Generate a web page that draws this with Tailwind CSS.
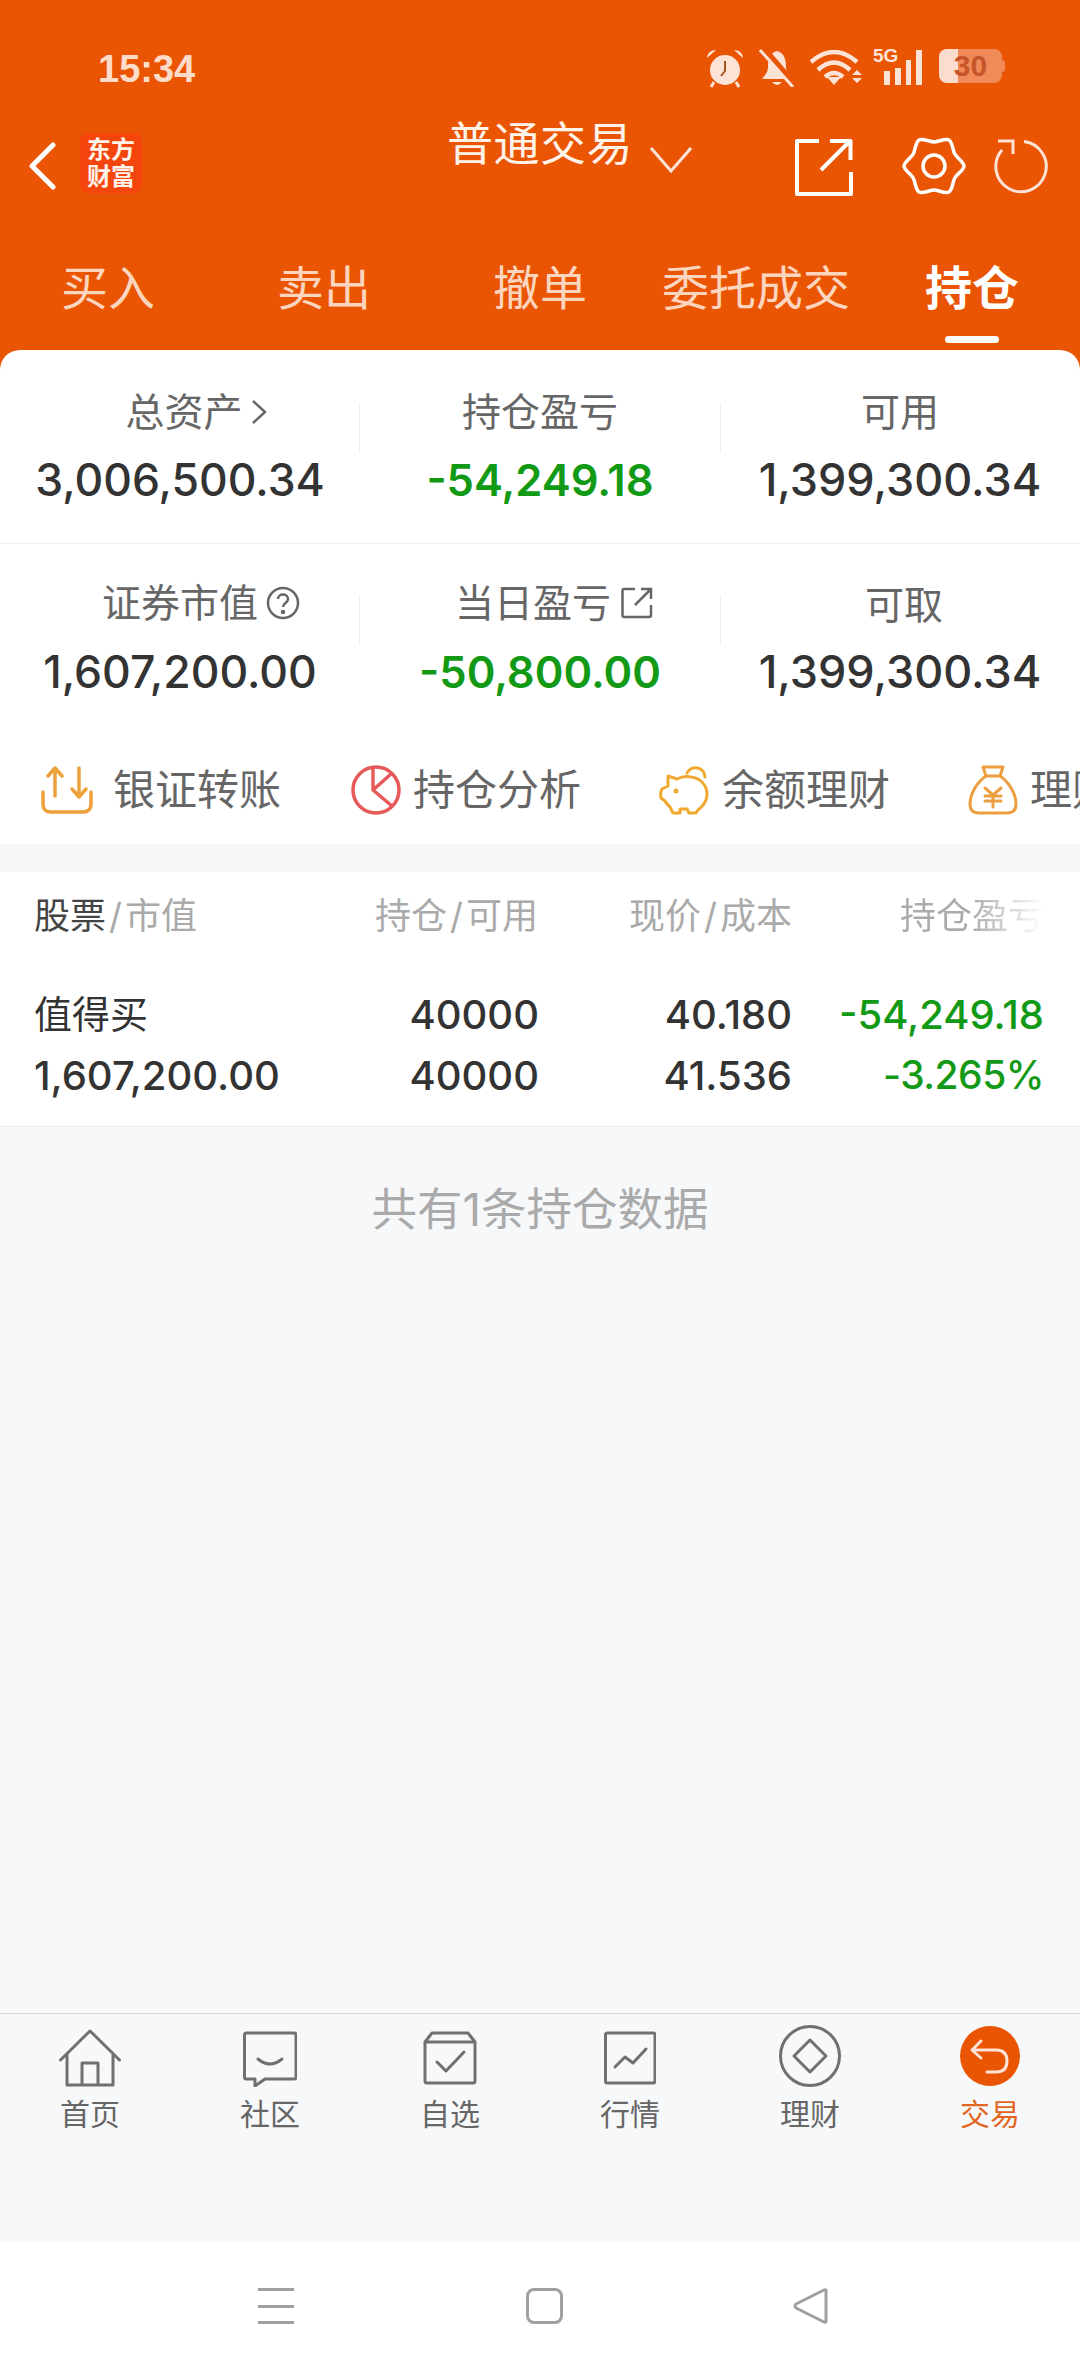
<!DOCTYPE html>
<html lang="zh-CN">
<head>
  <meta charset="UTF-8" />
  <meta name="viewport" content="width=device-width, initial-scale=1.0" />
  <title>持仓</title>
  <script src="https://cdn.jsdelivr.net/npm/@tailwindcss/browser@4"></script>
</head>
<body class="w-[1080px] h-[2374px] overflow-hidden bg-white font-[Inter,'Noto_Sans_CJK_SC',sans-serif] text-[#333]">
<div class="flex flex-col h-[2374px]">

  <!-- HEADER + CARD -->
  <div class="bg-[#ea5504]">
    <!-- status bar -->
    <div class="h-[104px] flex items-start pt-[47px] pr-[75px] text-[#fde3d6]">
      <span class="ml-[98px] text-[38px] leading-[44px] font-bold font-['Liberation_Sans',sans-serif] text-[#fddcc9]">15:34</span>
      <div class="ml-auto flex items-start pt-[2px]">
        <svg width="38" height="40" viewBox="0 0 38 40" class="-mt-[1px]" fill="none">
          <circle cx="19" cy="22" r="15" fill="#fde3d6"/>
          <path d="M1 10 Q2 2 10 2 Z M37 10 Q36 2 28 2 Z" fill="#fde3d6"/>
          <path d="M19 13 V23 L15 28" stroke="#a8541f" stroke-width="2"/>
          <path d="M8 34 L5 39 M30 34 L33 39" stroke="#fde3d6" stroke-width="3"/>
        </svg>
        <svg width="36" height="38" viewBox="0 0 36 38" fill="none" class="ml-[15px]">
          <path d="M18 2 C10 4 9 12 9 18 C9 23 6 26 3 30 H33 C30 26 27 23 27 18 C27 12 26 4 18 2 Z" fill="#fde3d6"/>
          <path d="M13 33 Q18 39 23 33 Z" fill="#fde3d6"/>
          <path d="M4 -2 L36 35" stroke="#ea5504" stroke-width="5"/>
          <path d="M1 1 L34 38" stroke="#fde3d6" stroke-width="3"/>
        </svg>
        <svg width="52" height="36" viewBox="0 0 52 36" fill="none" stroke="#fde3d6" stroke-width="4.500" class="ml-[15px] mt-[1px]">
          <path d="M1 12 Q24 -8 47 12"/>
          <path d="M8 20 Q24 5 40 20"/>
          <path d="M15 27 Q24 19 33 27" />
          <path d="M17 27 L24 35 L31 27 Z" fill="#fde3d6" stroke="none"/>
          <path d="M42 25 L47 20 L52 25 Z M42 28 L47 33 L52 28 Z" fill="#fde3d6" stroke="none"/>
        </svg>
        <div class="relative ml-[11px] w-[49px] h-[36px] flex items-end gap-[5px] pl-[11px]">
          <span class="absolute left-0 -top-[3px] text-[19px] leading-[20px] font-bold text-[#fde3d6] font-['Liberation_Sans',sans-serif]">5G</span>
          <span class="w-[6px] h-[14px] bg-[#fde3d6]"></span>
          <span class="w-[6px] h-[17px] bg-[#fde3d6]"></span>
          <span class="w-[6px] h-[25px] bg-[#fde3d6]"></span>
          <span class="w-[6px] h-[35px] bg-[#fde3d6]"></span>
        </div>
        <div class="ml-[17px] flex items-center h-[34px]">
          <div class="relative w-[63px] h-[34px] rounded-[8px] overflow-hidden bg-[#f08a58] flex items-center justify-center">
            <span class="absolute left-0 top-0 bottom-0 w-[19px] bg-[#fbdccd]"></span>
            <span class="relative text-[30px] leading-[34px] font-bold text-[#c6552a] font-['Liberation_Sans',sans-serif]">30</span>
          </div>
          <span class="w-[3px] h-[12px] rounded-r bg-[#f08a58]"></span>
        </div>
      </div>
    </div>

    <!-- title row -->
    <div class="h-[136px] flex items-start text-white">
      <svg width="28" height="48" viewBox="0 0 28 48" fill="none" class="ml-[28px] mt-[38px]" stroke="#fff" stroke-width="5" stroke-linecap="round" stroke-linejoin="round">
        <path d="M25 3 L4 24 L25 45"/>
      </svg>
      <div class="ml-[24px] mt-[29px] w-[62px] h-[60px] rounded-[8px] bg-[#f4460c] flex flex-col items-center justify-center text-[24px] leading-[27px] font-bold text-[#fff3ea]">
        <span>东方</span>
        <span>财富</span>
      </div>
      <span class="w-[184px] ml-[305px] mt-[11px] text-[46px] leading-[56px] tracking-[0.500px] text-[#fff3ea] whitespace-nowrap">普通交易</span>
      <svg width="42" height="26" viewBox="0 0 42 26" fill="none" class="ml-[19px] mt-[43px]" stroke="#fde3d6" stroke-width="3">
        <path d="M1 1 L21 24 L41 1"/>
      </svg>
      <svg width="58" height="58" viewBox="0 0 58 58" fill="none" class="ml-[103px] mt-[34px]" stroke="#fff" stroke-width="4" stroke-linejoin="round">
        <path d="M24 3 H2 V56 H56 V34"/>
        <path d="M26 32 L55 3 M35 3 H55.500 V22"/>
      </svg>
      <svg width="64" height="62" viewBox="-2 -3 64 62" fill="none" class="ml-[49px] mt-[31px]" stroke="#fff" stroke-width="3.500">
        <path d="M30 4 C34 4 41.500 0 45 2 C48.500 4 48.780 12.500 50.780 16 C52.780 19.500 60 24 60 28 C60 32 52.780 36.500 50.780 40 C48.780 43.500 48.500 52 45 54 C41.500 56 34 52 30 52 C26 52 18.500 56 15 54 C11.500 52 11.220 43.500 9.220 40 C7.220 36.500 0 32 0 28 C0 24 7.220 19.500 9.220 16 C11.220 12.500 11.500 4 15 2 C18.500 0 26 4 30 4 Z"/>
        <circle cx="30" cy="28" r="11"/>
      </svg>
      <svg width="56" height="56" viewBox="0 0 56 56" fill="none" class="ml-[28px] mt-[35px]" stroke="#fde3d6" stroke-width="3">
        <path d="M30 2.500 A25.200 25.200 0 1 1 8 11"/>
        <path d="M4 2 H19 V15"/>
      </svg>
    </div>

    <!-- tabs -->
    <div class="grid grid-cols-5 h-[96px] items-center text-center text-[47px] text-[#fcd5bf]">
      <span>买入</span>
      <span>卖出</span>
      <span>撤单</span>
      <span>委托成交</span>
      <span class="font-bold text-white">持仓</span>
    </div>
    <div class="h-[14px]">
      <div class="ml-[945px] w-[54px] h-[7px] rounded-full bg-white"></div>
    </div>

    <!-- CARD -->
    <div class="bg-white rounded-t-[20px]">
      <div class="flex h-[194px] border-b border-[#eeeeee] text-center">
        <div class="w-[360px] pt-[37px]">
          <div class="h-[50px] flex items-center justify-center pl-[32px] text-[39px] text-[#666]">总资产
            <svg width="16" height="26" viewBox="0 0 16 26" fill="none" stroke="#666" stroke-width="2.500" class="ml-[8px]"><path d="M2 2 L14 13 L2 24"/></svg>
          </div>
          <div class="mt-[13px] h-[60px] leading-[60px] text-[44.500px] font-medium text-[#333] whitespace-nowrap">3,006,500.34</div>
        </div>
        <div class="w-px h-[50px] mt-[53px] bg-[#efefef] -ml-px"></div>
        <div class="w-[360px] pt-[37px]">
          <div class="h-[50px] flex items-center justify-center text-[39px] text-[#666]">持仓盈亏</div>
          <div class="mt-[13px] h-[60px] leading-[60px] text-[43.500px] font-semibold text-[#129a16]">-54,249.18</div>
        </div>
        <div class="w-px h-[50px] mt-[53px] bg-[#efefef]"></div>
        <div class="w-[358px] pt-[37px]">
          <div class="h-[50px] flex items-center justify-center text-[39px] text-[#666]">可用</div>
          <div class="mt-[13px] h-[60px] leading-[60px] text-[45px] font-medium text-[#333]">1,399,300.34</div>
        </div>
      </div>

      <div class="flex h-[186px] text-center">
        <div class="w-[360px] pt-[34px]">
          <div class="h-[50px] flex items-center justify-center pl-[42px] text-[39px] text-[#666]">证券市值
            <svg width="34" height="34" viewBox="0 0 34 34" fill="none" stroke="#666" stroke-width="2.500" class="ml-[8px]"><circle cx="17" cy="17" r="15"/><path d="M12 13 C12 7 22 7 22 13 C22 17 17 17 17 21"/><circle cx="17" cy="26" r="1" fill="#666"/></svg>
          </div>
          <div class="mt-[14px] h-[60px] leading-[60px] text-[44.500px] font-medium text-[#333]">1,607,200.00</div>
        </div>
        <div class="w-px h-[50px] mt-[51px] bg-[#efefef] -ml-px"></div>
        <div class="w-[360px] pt-[34px]">
          <div class="h-[50px] flex items-center justify-center pl-[28px] text-[39px] text-[#666]">当日盈亏
            <svg width="32" height="32" viewBox="0 0 32 32" fill="none" stroke="#666" stroke-width="2.500" class="ml-[10px]"><path d="M14 2 H3 Q1.500 2 1.500 4 V28 Q1.500 30 3 30 H28 Q30 30 30 28 V18"/><path d="M14 18 L29 3 M20 2 H30 V12"/></svg>
          </div>
          <div class="mt-[14px] h-[60px] leading-[60px] text-[43.500px] font-semibold text-[#129a16]">-50,800.00</div>
        </div>
        <div class="w-px h-[50px] mt-[51px] bg-[#efefef]"></div>
        <div class="w-[358px] pt-[36px]">
          <div class="h-[50px] flex items-center justify-center pl-[8px] text-[39px] text-[#666]">可取</div>
          <div class="mt-[12px] h-[60px] leading-[60px] text-[45px] font-medium text-[#333]">1,399,300.34</div>
        </div>
      </div>

      <!-- shortcuts -->
      <div class="h-[114px] pt-[5px] flex items-center overflow-hidden whitespace-nowrap text-[42px] text-[#666]">
        <svg width="52" height="48" viewBox="0 0 52 48" fill="none" class="ml-[41px] shrink-0" stroke="#eda13b" stroke-width="3.500" stroke-linecap="round" stroke-linejoin="round">
          <path d="M14 30 V2 M7 10 L14 2 L21 10"/>
          <path d="M38 2 V30 M31 23 L38 31 L45 23"/>
          <path d="M2 26 V38 Q2 46 10 46 H42 Q50 46 50 38 V26"/>
        </svg>
        <span class="ml-[20px]">银证转账</span>
        <svg width="50" height="50" viewBox="0 0 50 50" fill="none" class="ml-[70px] shrink-0" stroke="#e75a5a" stroke-width="3.500" stroke-linejoin="round">
          <circle cx="25" cy="25" r="23"/>
          <path d="M22 3 V25 L41 41 M22 25 L40 9"/>
        </svg>
        <span class="ml-[12px]">持仓分析</span>
        <svg width="50" height="50" viewBox="-1 -1 50 50" fill="none" class="ml-[78px] shrink-0" stroke="#f0a92e" stroke-width="3" stroke-linejoin="round" stroke-linecap="round">
          <path d="M27 7 A9.500 9.500 0 0 1 45 11"/>
          <path d="M8 10 L17 13 C21 11 27 10 31 11 C41 12 47 20 47 28 C47 36 42 41 38 44 L36 47 H29 L27 43 H20 L20 47 H13 L10 41 C8 39 6 37 5 35 L1 32 Q0 26 2 23 L8 20 Z"/>
          <circle cx="16" cy="25" r="1" fill="#f0a92e"/>
        </svg>
        <span class="ml-[13px]">余额理财</span>
        <svg width="50" height="50" viewBox="-1 -1 50 50" fill="none" class="ml-[78px] shrink-0" stroke="#ec9f40" stroke-width="3" stroke-linejoin="round" stroke-linecap="round">
          <path d="M14 1 H34 L31 10 H17 Z"/>
          <path d="M17 10 C8 16 1 28 1 38 Q1 47 10 47 H38 Q47 47 47 38 C47 28 40 16 31 10"/>
          <path d="M16 22 L24 29 L32 22 M24 29 V41 M16 30 H32 M16 35 H32"/>
        </svg>
        <span class="ml-[12px]">理财</span>
      </div>
    </div>
  </div>

  <div class="flex-1 flex flex-col bg-[#f7f8fa]">
    <!-- TABLE -->
    <div class="mt-[28px] h-[255px] bg-white border-b border-[#ebebeb] px-[34px]">
      <div class="h-[88px] flex items-center text-[36px] text-[#aaa] whitespace-nowrap">
        <div class="w-[240px]"><span class="text-[#444]">股票</span><span class="mx-[3px]">/</span>市值</div>
        <div class="w-[264px] text-right">持仓<span class="mx-[3px]">/</span>可用</div>
        <div class="w-[254px] text-right">现价<span class="mx-[3px]">/</span>成本</div>
        <div class="w-[252px] text-right bg-linear-to-r from-[#aaa] from-70% to-white bg-clip-text text-transparent">持仓盈亏</div>
      </div>
      <div class="mt-[24px] flex h-[61px] items-center text-[40px] font-medium whitespace-nowrap">
        <div class="w-[240px] text-[38px] font-normal">值得买</div>
        <div class="w-[265px] text-right">40000</div>
        <div class="w-[253px] text-right">40.180</div>
        <div class="w-[252px] text-right text-[#129a16]">-54,249.18</div>
      </div>
      <div class="flex h-[61px] items-center text-[40px] font-medium whitespace-nowrap">
        <div class="w-[240px]">1,607,200.00</div>
        <div class="w-[265px] text-right">40000</div>
        <div class="w-[253px] text-right">41.536</div>
        <div class="w-[252px] text-right text-[39px] tracking-[-0.500px] text-[#129a16]">-3.265%</div>
      </div>
    </div>

    <div class="mt-[53px] text-center text-[45.500px] leading-[60px] text-[#aaaaaa]">共有1条持仓数据</div>
    <div class="flex-1"></div>

    <!-- BOTTOM NAV -->
    <div class="h-[229px] border-t border-[#d5d7da] grid grid-cols-6 text-center text-[30px] leading-[40px] text-[#666]">
      <div class="flex flex-col items-center">
        <div class="h-[82px] flex items-center pt-[6px]">
          <svg width="62" height="58" viewBox="0 0 62 58" fill="none" stroke="#707070" stroke-width="3" stroke-linejoin="round" stroke-linecap="round"><path d="M1.500 31 L31 2 L60.500 31 M8 26 V56 H54 V26 M23 56 V34 H39 V56"/></svg>
        </div>
        <span class="-mt-[2px]">首页</span>
      </div>
      <div class="flex flex-col items-center">
        <div class="h-[82px] flex items-center pt-[8px]">
          <svg width="54" height="56" viewBox="0 0 54 56" fill="none" stroke="#707070" stroke-width="3" stroke-linejoin="round" stroke-linecap="round"><path d="M3 2 H51 Q53 2 53 4 V46 Q53 48 51 48 H22 L12 55 V48 H3 Q1.500 48 1.500 46 V4 Q1.500 2 3 2 Z"/><path d="M15 28 Q27 38 39 28"/></svg>
        </div>
        <span class="-mt-[2px]">社区</span>
      </div>
      <div class="flex flex-col items-center">
        <div class="h-[82px] flex items-center pt-[6px]">
          <svg width="54" height="54" viewBox="0 0 54 54" fill="none" stroke="#707070" stroke-width="3" stroke-linejoin="round" stroke-linecap="round"><path d="M2 11 L9 2 H45 L52 11 V50 Q52 52 50 52 H4 Q2 52 2 50 Z M2 11 H52"/><path d="M14 31 L23 40 L41 21"/></svg>
        </div>
        <span class="-mt-[2px]">自选</span>
      </div>
      <div class="flex flex-col items-center">
        <div class="h-[82px] flex items-center pt-[6px]">
          <svg width="52" height="54" viewBox="0 0 52 54" fill="none" stroke="#707070" stroke-width="3" stroke-linejoin="round" stroke-linecap="round"><path d="M3 2 H49 Q51 2 51 4 V50 Q51 52 49 52 H3 Q1.500 52 1.500 50 V4 Q1.500 2 3 2 Z"/><path d="M11 36 L21 26 L29 32 L42 18"/></svg>
        </div>
        <span class="-mt-[2px]">行情</span>
      </div>
      <div class="flex flex-col items-center">
        <div class="h-[82px] flex items-center pt-[2px]">
          <svg width="62" height="62" viewBox="0 0 62 62" fill="none" stroke="#707070" stroke-width="3" stroke-linejoin="round"><circle cx="31" cy="31" r="29.500"/><path d="M31 15 L47 31 L31 47 L15 31 Z"/></svg>
        </div>
        <span class="-mt-[2px]">理财</span>
      </div>
      <div class="flex flex-col items-center">
        <div class="h-[82px] flex items-center pt-[2px]">
          <svg width="60" height="60" viewBox="0 0 60 60" fill="none"><circle cx="30" cy="30" r="30" fill="#ea5504"/><path d="M21 15 L12 24 L21 32 M12 24 H36 Q47 24 47 35 Q47 46 36 46 H27" stroke="#fde3d6" stroke-width="3" stroke-linecap="round" stroke-linejoin="round"/></svg>
        </div>
        <span class="-mt-[2px] text-[#e2661f]">交易</span>
      </div>
    </div>
  </div>

  <!-- SYSTEM NAV -->
  <div class="h-[132px] shrink-0 bg-white flex items-start pt-[46px]">
    <div class="ml-[258px] w-[36px] h-[36px] flex flex-col justify-between">
      <span class="h-[3px] bg-[#a0a0a0]"></span>
      <span class="h-[3px] bg-[#a0a0a0]"></span>
      <span class="h-[3px] bg-[#a0a0a0]"></span>
    </div>
    <div class="ml-[232px] w-[37px] h-[36px] rounded-[8px] border-[3px] border-[#a0a0a0]"></div>
    <svg width="36" height="36" viewBox="0 0 36 36" fill="none" stroke="#a0a0a0" stroke-width="3" stroke-linejoin="round" class="ml-[230px]"><path d="M33 2 V33 Q33 35 31 34 L3 20 Q1 18 3 16 L31 2 Q33 1 33 3 Z"/></svg>
  </div>
</div>
</body>
</html>
